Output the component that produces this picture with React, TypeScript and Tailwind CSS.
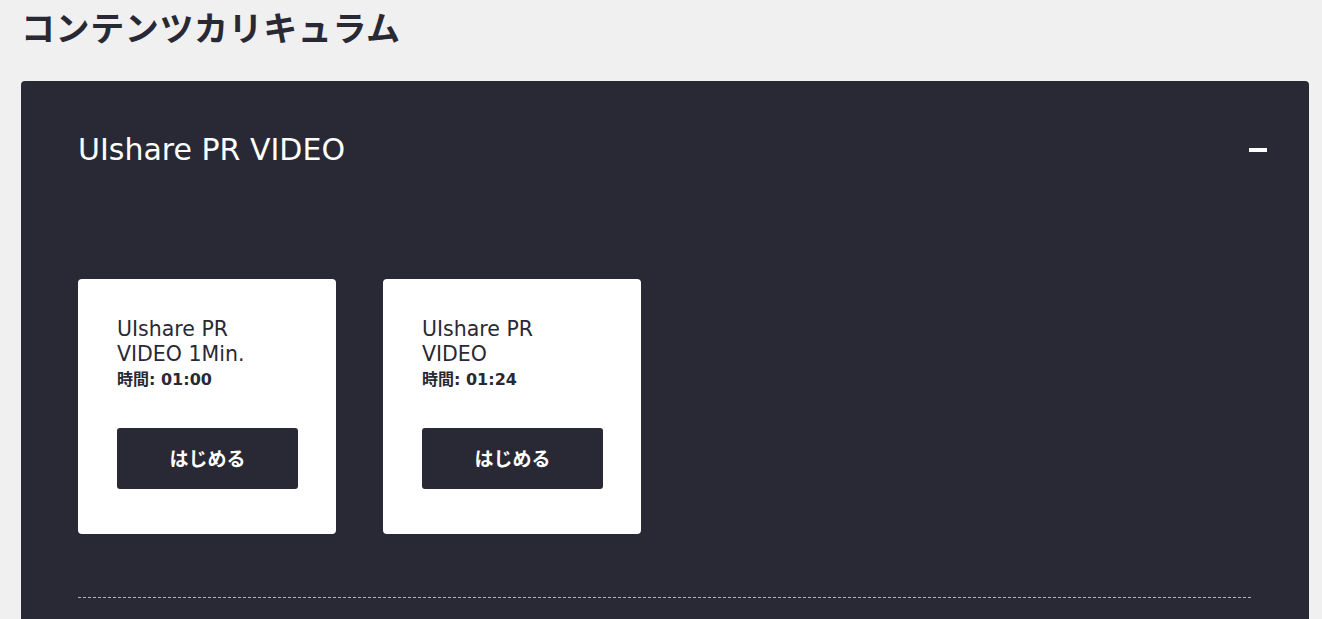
import React from 'react';

const lessons = [
  { id: 1, title: 'UIshare PR VIDEO 1Min.', time: '01:00' },
  { id: 2, title: 'UIshare PR VIDEO', time: '01:24' },
];

const App: React.FC = () => {
  return (
    <div
      className="min-h-screen bg-[#f0f0f0] pl-[21px] pr-[13px] text-[#292935]"
      style={{ fontFamily: '"DejaVu Sans", "Noto Sans CJK JP", sans-serif' }}
    >
      <h1
        className="pt-[4px] text-[34px] font-bold leading-[46px] tracking-[0.6px]"
        style={{ fontFamily: '"Noto Sans CJK JP", sans-serif' }}
      >
        コンテンツカリキュラム
      </h1>

      <section className="mt-[31px] rounded-[4px] bg-[#292935] pl-[57px] pr-[58px] pb-[40px] text-white">
        <div className="flex items-center justify-between pt-[50px]">
          <h2 className="text-[30px] leading-[38px]">UIshare PR VIDEO</h2>
          <span className="mr-[-16px] block h-[4px] w-[18px] bg-white" />
        </div>

        <div className="mt-[110px] flex gap-[47px]">
          {lessons.map((lesson) => (
            <div
              key={lesson.id}
              className="h-[255px] w-[258px] rounded-[4px] bg-white px-[39px] pt-[38px] text-[#292935]"
            >
              <h3 className="max-w-[160px] text-[20.5px] leading-[25px]">{lesson.title}</h3>
              <p className="text-[16px] font-bold leading-[25px]">時間: {lesson.time}</p>
              <button
                className="mt-[36px] flex h-[61px] w-[181px] items-center justify-center rounded-[3px] bg-[#292935] text-[19px] font-bold text-white"
                style={{ fontFamily: '"Noto Sans CJK JP", sans-serif' }}
              >
                はじめる
              </button>
            </div>
          ))}
        </div>

        <div className="mt-[63px] border-t border-dashed border-[#b4b4bc]" />
      </section>
    </div>
  );
};

export default App;
